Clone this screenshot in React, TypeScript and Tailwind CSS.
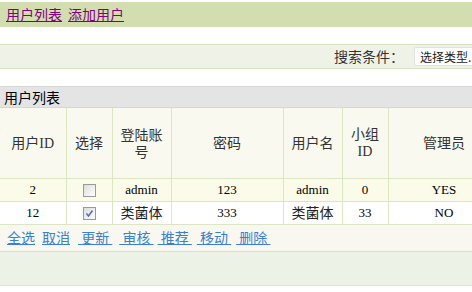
import React from "react";

const border = "border-[#dde6c2]";

function Box({ checked }: { checked?: boolean }) {
  return (
    <span className="inline-flex items-center justify-center w-[13px] h-[13px] border border-[#9a9a9a] bg-gradient-to-br from-[#dcdcdc] to-[#ffffff] align-middle">
      {checked && (
        <svg width="9" height="9" viewBox="0 0 9 9">
          <path d="M1.5 4.5 L3.5 7 L7.5 1.5" fill="none" stroke="#5a6fb0" strokeWidth="1.6" />
        </svg>
      )}
    </span>
  );
}

export default function App() {
  const cols = ["w-[66px]", "w-[46px]", "w-[59px]", "w-[112px]", "w-[59px]", "w-[46px]", "w-[112px]"];
  const serifId = "font-['Liberation_Serif',serif]";
  const head = [
    <>用户<span className={serifId}>ID</span></>,
    <>选择</>,
    <>登陆账<br />号</>,
    <>密码</>,
    <>用户名</>,
    <>小组<br /><span className={serifId}>ID</span></>,
    <>管理员</>,
  ];
  const rows = [
    { id: "2", checked: false, acct: "admin", pw: "123", name: "admin", grp: "0", admin: "YES", bg: "bg-[#fbfbea]" },
    { id: "12", checked: true, acct: "类菌体", pw: "333", name: "类菌体", grp: "33", admin: "NO", bg: "bg-white" },
  ];
  const cjk = "font-['Noto_Sans_CJK_SC',sans-serif]";
  const nb = "\u00a0";
  const links: [string, string][] = [
    ["全选", "ml-[7px]"],
    ["取消", "ml-[7px]"],
    [nb + "更新" + nb, "ml-[8px]"],
    [nb + "审核" + nb, "ml-[7px]"],
    [nb + "推荐" + nb, "ml-[4px]"],
    [nb + "移动" + nb, "ml-[5px]"],
    [nb + "删除" + nb, "ml-[5px]"],
  ];
  return (
    <div className="w-[472px] h-[292px] overflow-hidden bg-white text-black font-['Liberation_Serif','Noto_Sans_CJK_SC',serif]">
      <div className="mt-[2px] h-[25px] bg-[#d2ddb0] flex items-center pl-[6px] gap-[6px] text-[14px]">
        <a className={`text-[#800080] underline ${cjk}`}>用户列表</a>
        <a className={`text-[#800080] underline ${cjk}`}>添加用户</a>
      </div>
      <div className="h-[17px]" />
      <div className="h-[25px] border-y border-[#d9e1c3] bg-[#eef2e7] flex items-center justify-end">
        <span className={`text-[14px] text-[#333] ${cjk}`}>搜索条件：</span>
        <span className={`ml-[10px] mr-[-20px] h-[19px] w-[78px] bg-white border border-[#e2e2e2] rounded-[2px] flex items-center pl-[5px] text-[12px] text-[#222] whitespace-nowrap overflow-hidden ${cjk}`}>
          选择类型...
        </span>
      </div>
      <div className="h-[17px]" />
      <div className={`h-[22px] bg-[#e4e4e4] border-y border-[#d6d6d6] flex items-center pl-[4px] text-[14px] ${cjk}`}>用户列表</div>
      <table className={`w-[500px] border-collapse table-fixed text-[13px]`}>
        <colgroup>
          {cols.map((c, i) => (
            <col key={i} className={c} />
          ))}
        </colgroup>
        <thead>
          <tr className="h-[70px] bg-[#f9f9ef]">
            {head.map((h, i) => (
              <th key={i} className={`border ${border} border-t-0 first:border-l-0 font-normal text-center align-middle leading-[17px] text-[14px] text-[#333] ${cjk}`}>
                {h}
              </th>
            ))}
          </tr>
        </thead>
        <tbody>
          {rows.map((r, i) => (
            <tr key={i} className={`h-[23px] ${r.bg}`}>
              <td className={`border ${border} border-l-0 text-center`}>{r.id}</td>
              <td className={`border ${border} text-center`}>
                <Box checked={r.checked} />
              </td>
              <td className={`border ${border} text-center`}>{r.acct === "admin" ? r.acct : <span className={`text-[14px] text-[#222] ${cjk}`}>{r.acct}</span>}</td>
              <td className={`border ${border} text-center`}>{r.pw}</td>
              <td className={`border ${border} text-center`}>{r.name === "admin" ? r.name : <span className={`text-[14px] text-[#222] ${cjk}`}>{r.name}</span>}</td>
              <td className={`border ${border} text-center`}>{r.grp}</td>
              <td className={`border ${border} text-center`}>{r.admin}</td>
            </tr>
          ))}
        </tbody>
      </table>
      <div className={`h-[26px] bg-[#f8f8f0] flex items-center text-[14px] whitespace-pre ${cjk}`}>
        {links.map(([t, c]) => (
          <a key={t} className={`text-[#3a7fd0] underline ${c}`}>{t}</a>
        ))}
      </div>
      <div className="h-[35px] bg-[#edf2e6] border-y border-[#dbe3c6]" />
    </div>
  );
}
